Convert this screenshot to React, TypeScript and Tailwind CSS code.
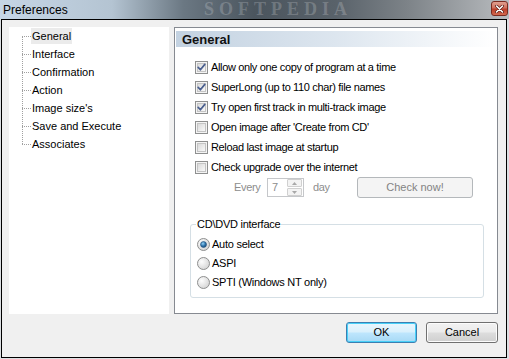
import React from 'react'

const treeItems = ['General', 'Interface', 'Confirmation', 'Action', "Image size's", 'Save and Execute', 'Associates']

const options = [
  { label: 'Allow only one copy of program at a time', checked: true },
  { label: 'SuperLong (up to 110 char) file names', checked: true },
  { label: 'Try open first track in multi-track image', checked: true },
  { label: "Open image after 'Create from CD'", checked: false },
  { label: 'Reload last image at startup', checked: false },
  { label: 'Check upgrade over the internet', checked: false },
]

const radios = [
  { label: 'Auto select', selected: true },
  { label: 'ASPI', selected: false },
  { label: 'SPTI (Windows NT only)', selected: false },
]

const CheckBox: React.FC<{ checked: boolean }> = ({ checked }) => (
  <svg width="13" height="13" viewBox="0 0 13 13" className="shrink-0">
    <defs>
      <linearGradient id="cbg" x1="0" y1="0" x2="1" y2="1">
        <stop offset="0" stopColor="#d8d8d8" />
        <stop offset="1" stopColor="#fbfbfb" />
      </linearGradient>
    </defs>
    <rect x="0.5" y="0.5" width="12" height="12" fill="#f4f4f4" stroke="#8e8f8f" />
    <rect x="2.5" y="2.5" width="8" height="8" fill="url(#cbg)" stroke="#c4c4c4" />
    {checked && (
      <path d="M3.2 6.4 L5.4 8.8 L9.8 3.4" fill="none" stroke="#4a5f8f" strokeWidth="1.7" strokeLinecap="round" strokeLinejoin="round" />
    )}
  </svg>
)

const Radio: React.FC<{ selected: boolean }> = ({ selected }) => (
  <svg width="13" height="13" viewBox="0 0 13 13" className="shrink-0">
    <defs>
      <radialGradient id="rg" cx="0.35" cy="0.35" r="0.8">
        <stop offset="0" stopColor="#fdfdfd" />
        <stop offset="1" stopColor="#cfcfcf" />
      </radialGradient>
      <radialGradient id="rdot" cx="0.4" cy="0.35" r="0.7">
        <stop offset="0" stopColor="#8fd0f5" />
        <stop offset="0.6" stopColor="#2a6ea6" />
        <stop offset="1" stopColor="#1c4c78" />
      </radialGradient>
    </defs>
    <circle cx="6.5" cy="6.5" r="6" fill="url(#rg)" stroke="#8e8f8f" />
    {selected && <circle cx="6.5" cy="6.5" r="3" fill="url(#rdot)" stroke="#27537e" strokeWidth="0.6" />}
  </svg>
)

const App: React.FC = () => {
  return (
    <div className="w-[509px] h-[359px] bg-[#dcdfe2] overflow-hidden font-['Liberation_Sans',Arial,sans-serif] text-black">
      {/* title bar */}
      <div className="relative h-[19px] flex items-center justify-between bg-[linear-gradient(90deg,#c6d6e6_0%,#b4c4d2_22%,#6b7883_36%,#4b555e_50%,#59626a_66%,#7d8388_80%,#b9bcbf_100%)] overflow-hidden">
        <span className="absolute left-[204px] top-[0px] font-['Liberation_Serif',serif] font-bold text-[18px] tracking-[5px] leading-none text-white/20">SOFTPEDIA</span>
        <span className="relative pl-[3px] text-[12px] leading-none">Preferences</span>
        <div className="relative mr-[1px] mt-[-2px] w-[17px] h-[15px] rounded-[3px] border border-[#7b2b20] bg-[linear-gradient(180deg,#e0a090_0%,#d0705c_45%,#bb3e28_55%,#d46a50_100%)] flex items-center justify-center">
          <svg width="9" height="8" viewBox="0 0 9 8">
            <path d="M1.5 1 L7.5 7 M7.5 1 L1.5 7" stroke="#5a1c14" strokeWidth="3" strokeLinecap="round" />
            <path d="M1.5 1 L7.5 7 M7.5 1 L1.5 7" stroke="#fff" strokeWidth="1.6" strokeLinecap="round" />
          </svg>
        </div>
      </div>

      {/* dialog body */}
      <div className="ml-[1px] w-[506px] h-[339px] border border-black bg-[#f0f0f0] flex flex-col pt-[7px] pl-[7px] pr-[8px]">
        <div className="flex h-[287px] gap-[5px]">
          {/* tree */}
          <div className="relative w-[160px] bg-white text-[11px]">
            <div className="absolute left-[13px] top-[9px] h-[108px] border-l border-dotted border-[#a0a0a0]" />
            {treeItems.map((item, i) => (
              <div key={item} className="flex items-center h-[18px]">
                <div className="ml-[13px] w-[9px] border-t border-dotted border-[#a0a0a0]" />
                <span className={`px-[1px] h-[16px] flex items-center ${i === 0 ? 'bg-[#ebebeb]' : ''}`}>{item}</span>
              </div>
            ))}
          </div>

          {/* panel */}
          <div className="flex-1 border border-[#868a91] bg-white flex flex-col">
            <div className="mt-[3px] mx-[1px] h-[16px] bg-[linear-gradient(90deg,#c3d2e1_0%,#dde6ef_50%,#ffffff_100%)] flex items-center pl-[6px]">
              <span className="text-[13px] font-bold leading-none text-[#111]">General</span>
            </div>

            <div className="mt-[10px] pl-[20px] text-[11px] tracking-[-0.35px]">
              {options.map((o) => (
                <div key={o.label} className="flex items-center h-[20px] gap-[3px]">
                  <CheckBox checked={o.checked} />
                  <span>{o.label}</span>
                </div>
              ))}
              <div className="flex items-center h-[21px] text-[#8d8d8d]">
                <span className="ml-[39px] w-[33px]">Every</span>
                <div className="w-[37px] h-[19px] border border-[#c5c7ca] flex items-center">
                  <span className="flex-1 pl-[4px]">7</span>
                  <div className="w-[15px] h-[17px] mr-[1px] flex flex-col gap-[1px]">
                    <div className="flex-1 border border-[#d0d0d0] rounded-[1px] bg-[#f3f3f3] flex items-center justify-center">
                      <svg width="5" height="3" viewBox="0 0 5 3"><path d="M0 3 L2.5 0 L5 3 Z" fill="#a8a8a8" /></svg>
                    </div>
                    <div className="flex-1 border border-[#d0d0d0] rounded-[1px] bg-[#f3f3f3] flex items-center justify-center">
                      <svg width="5" height="3" viewBox="0 0 5 3"><path d="M0 0 L2.5 3 L5 0 Z" fill="#a8a8a8" /></svg>
                    </div>
                  </div>
                </div>
                <span className="ml-[9px] w-[44px]">day</span>
                <div className="w-[116px] h-[21px] rounded-[3px] border border-[#b4b8bb] bg-[#f4f4f4] flex items-center justify-center text-[#838383] tracking-normal">
                  Check now!
                </div>
              </div>
            </div>

            {/* group box */}
            <div className="relative mt-[26px] ml-[15px] mr-[13px] h-[74px] border border-[#d5dfe5] rounded-[3px] pt-[10px] pl-[6px] text-[11px] tracking-[-0.25px]">
              <span className="absolute left-[5px] top-[-7px] px-[1px] bg-white leading-[13px]">CD\DVD interface</span>
              {radios.map((r) => (
                <div key={r.label} className="flex items-center h-[19px] gap-[2px]">
                  <Radio selected={r.selected} />
                  <span>{r.label}</span>
                </div>
              ))}
            </div>
          </div>
        </div>

        {/* buttons */}
        <div className="flex justify-end gap-[9px] mt-[8px] text-[11px]">
          <button className="w-[71px] h-[21px] rounded-[3px] border border-[#3c7fb1] bg-[linear-gradient(180deg,#eaf6fd_0%,#d9f0fc_48%,#bee6fd_52%,#a7d9f5_100%)] shadow-[inset_0_0_0_1px_#48d0f8] flex items-center justify-center">
            OK
          </button>
          <button className="w-[72px] h-[21px] rounded-[3px] border border-[#707070] bg-[linear-gradient(180deg,#f2f2f2_0%,#ebebeb_48%,#dddddd_52%,#cfcfcf_100%)] shadow-[inset_0_0_0_1px_#fcfcfc] flex items-center justify-center">
            Cancel
          </button>
        </div>
      </div>
    </div>
  )
}

export default App
